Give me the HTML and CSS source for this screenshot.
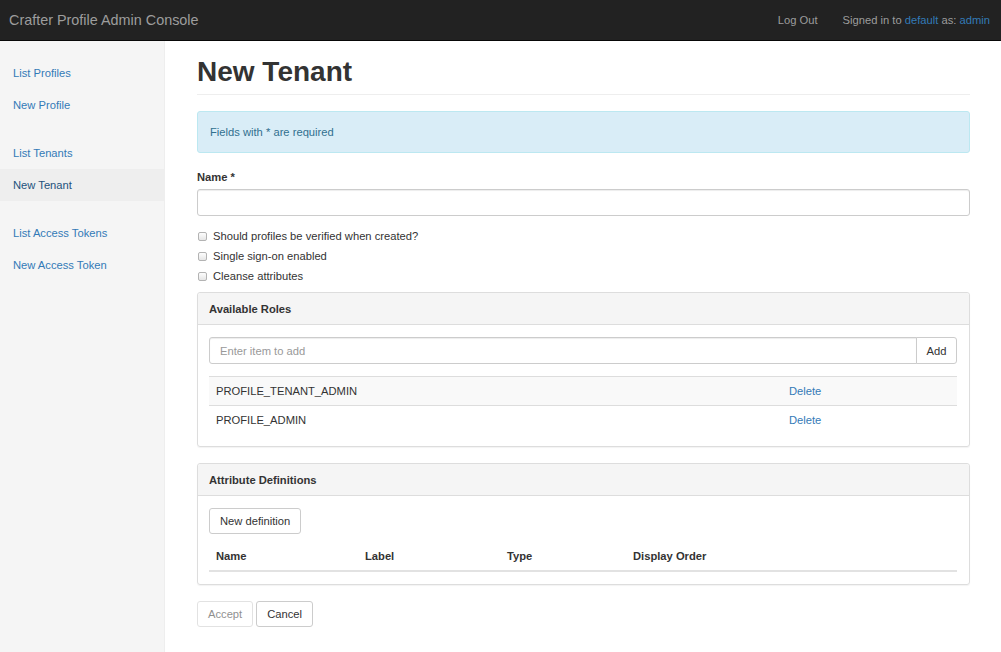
FILE: index.html
```html
<!DOCTYPE html>
<html>
<head>
<meta charset="utf-8">
<title>Crafter Profile Admin Console</title>
<link rel="stylesheet" href="styles.css">
</head>
<body>
<header class="navbar">
  <a class="brand">Crafter Profile Admin Console</a>
  <div class="nav-right">
    <a class="nav-link">Log Out</a>
    <span class="nav-text">Signed in to <a class="nav-blue">default</a> as: <a class="nav-blue">admin</a></span>
  </div>
</header>
<div class="layout">
  <aside class="sidebar">
    <ul class="side-group">
      <li><a>List Profiles</a></li>
      <li><a>New Profile</a></li>
    </ul>
    <ul class="side-group">
      <li><a>List Tenants</a></li>
      <li class="active"><a>New Tenant</a></li>
    </ul>
    <ul class="side-group">
      <li><a>List Access Tokens</a></li>
      <li><a>New Access Token</a></li>
    </ul>
  </aside>
  <main class="main">
    <h1 class="page-header">New Tenant</h1>
    <div class="alert">Fields with * are required</div>
    <div class="form-group">
      <label class="label">Name *</label>
      <input class="form-control" type="text">
    </div>
    <div class="checks">
      <label class="check"><input type="checkbox"><span>Should profiles be verified when created?</span></label>
      <label class="check"><input type="checkbox"><span>Single sign-on enabled</span></label>
      <label class="check"><input type="checkbox"><span>Cleanse attributes</span></label>
    </div>
    <section class="panel">
      <div class="panel-heading">Available Roles</div>
      <div class="panel-body">
        <div class="input-group">
          <input class="form-control group-input" type="text" placeholder="Enter item to add">
          <button class="btn group-btn">Add</button>
        </div>
        <table class="table striped">
          <colgroup><col class="role-col"><col></colgroup>
          <tbody>
            <tr><td>PROFILE_TENANT_ADMIN</td><td><a class="link">Delete</a></td></tr>
            <tr><td>PROFILE_ADMIN</td><td><a class="link">Delete</a></td></tr>
          </tbody>
        </table>
      </div>
    </section>
    <section class="panel">
      <div class="panel-heading">Attribute Definitions</div>
      <div class="panel-body">
        <button class="btn">New definition</button>
        <table class="table defs">
          <colgroup><col class="c1"><col class="c2"><col class="c3"><col></colgroup>
          <thead>
            <tr><th>Name</th><th>Label</th><th>Type</th><th>Display Order</th></tr>
          </thead>
        </table>
      </div>
    </section>
    <div class="actions">
      <button class="btn" disabled>Accept</button>
      <button class="btn">Cancel</button>
    </div>
  </main>
</div>
</body>
</html>
```

FILE: styles.css
```css
* { box-sizing: border-box; }
html, body { margin: 0; padding: 0; }
body {
  font-family: "Liberation Sans", Arial, Helvetica, sans-serif;
  font-size: 11.2px;
  line-height: 16px;
  color: #333;
  background: #fff;
  min-height: 100vh;
  display: flex;
  flex-direction: column;
}
a { text-decoration: none; cursor: pointer; }

.navbar {
  height: 41px;
  background: #222;
  border-bottom: 1px solid #080808;
  display: flex;
  align-items: center;
  justify-content: space-between;
  flex-shrink: 0;
}
.brand {
  padding-left: 9px;
  font-size: 14.4px;
  color: #9d9d9d;
  line-height: 20px;
}
.nav-right {
  display: flex;
  align-items: center;
  gap: 25px;
  padding-right: 11px;
  color: #9d9d9d;
}
.nav-link { color: #9d9d9d; }
.nav-blue { color: #337ab7; }

.layout {
  flex: 1;
  display: flex;
}
.sidebar {
  width: 165px;
  flex-shrink: 0;
  background: #f5f5f5;
  border-right: 1px solid #eee;
  padding-top: 16px;
}
.side-group {
  list-style: none;
  margin: 0 0 16px;
  padding: 0;
}
.side-group a {
  display: block;
  padding: 8px 13px;
  color: #337ab7;
  line-height: 16px;
}
.side-group li.active { background: #eee; }
.side-group li.active a { color: #23527c; }

.main {
  flex: 1;
  padding: 15px 31px 20px 32px;
  min-width: 0;
}
.page-header {
  margin: 0 0 16px;
  padding-bottom: 6px;
  border-bottom: 1px solid #eee;
  font-size: 28px;
  line-height: 32px;
  font-weight: 700;
  color: #333;
}
.alert {
  padding: 12px;
  border: 1px solid #bce8f1;
  background: #d9edf7;
  color: #31708f;
  border-radius: 3px;
  margin-bottom: 16px;
}
.form-group { margin-bottom: 12px; }
.label {
  display: block;
  font-weight: 700;
  margin-bottom: 4px;
}
.form-control {
  display: block;
  width: 100%;
  height: 27px;
  padding: 5px 10px;
  font: inherit;
  color: #555;
  background: #fff;
  border: 1px solid #ccc;
  border-radius: 3px;
  box-shadow: inset 0 1px 1px rgba(0,0,0,.075);
  outline: none;
}
.form-control::placeholder { color: #999; }

.checks {
  display: flex;
  flex-direction: column;
  gap: 4px;
  margin-bottom: 8px;
}
.check {
  display: flex;
  align-items: center;
  gap: 6px;
  line-height: 16px;
  padding-left: 1px;
}
.check input {
  appearance: none;
  -webkit-appearance: none;
  margin: 0;
  width: 9px;
  height: 9px;
  border: 1px solid #b3b3b3;
  border-radius: 2px;
  background: linear-gradient(#fdfdfd, #e6e6e6);
}

.panel {
  border: 1px solid #ddd;
  border-radius: 3px;
  margin-bottom: 16px;
  box-shadow: 0 1px 1px rgba(0,0,0,.05);
}
.panel-heading {
  background: #f5f5f5;
  border-bottom: 1px solid #ddd;
  padding: 8px 11px 7px 11px;
  font-weight: 700;
  line-height: 16px;
  border-radius: 3px 3px 0 0;
}
.panel-body { padding: 12px 12px 12px 11px; }

.input-group {
  display: flex;
  margin-bottom: 12px;
}
.group-input {
  flex: 1;
  border-radius: 3px 0 0 3px;
}
.btn {
  font: inherit;
  line-height: 16px;
  color: #333;
  background: #fff;
  border: 1px solid #ccc;
  border-radius: 3px;
  padding: 4px 10px;
  cursor: pointer;
}
.btn:disabled { opacity: .55; cursor: default; }
.group-btn {
  height: 27px;
  width: 41px;
  padding: 0;
  margin-left: -1px;
  border-radius: 0 3px 3px 0;
}

.table {
  width: 100%;
  border-collapse: collapse;
}
.table td, .table th {
  padding: 6px 7px;
  line-height: 16px;
  text-align: left;
  vertical-align: top;
}
.table td { border-top: 1px solid #ddd; }
.striped tr:nth-child(odd) td { background: #f9f9f9; }
.role-col { width: 573px; }
.link { color: #337ab7; }

.defs { margin-top: 8px; }
.defs th {
  font-weight: 700;
  border-bottom: 2px solid #e2e2e2;
}
.c1 { width: 149px; }
.c2 { width: 142px; }
.c3 { width: 126px; }

.actions {
  display: flex;
  gap: 3px;
}
```
